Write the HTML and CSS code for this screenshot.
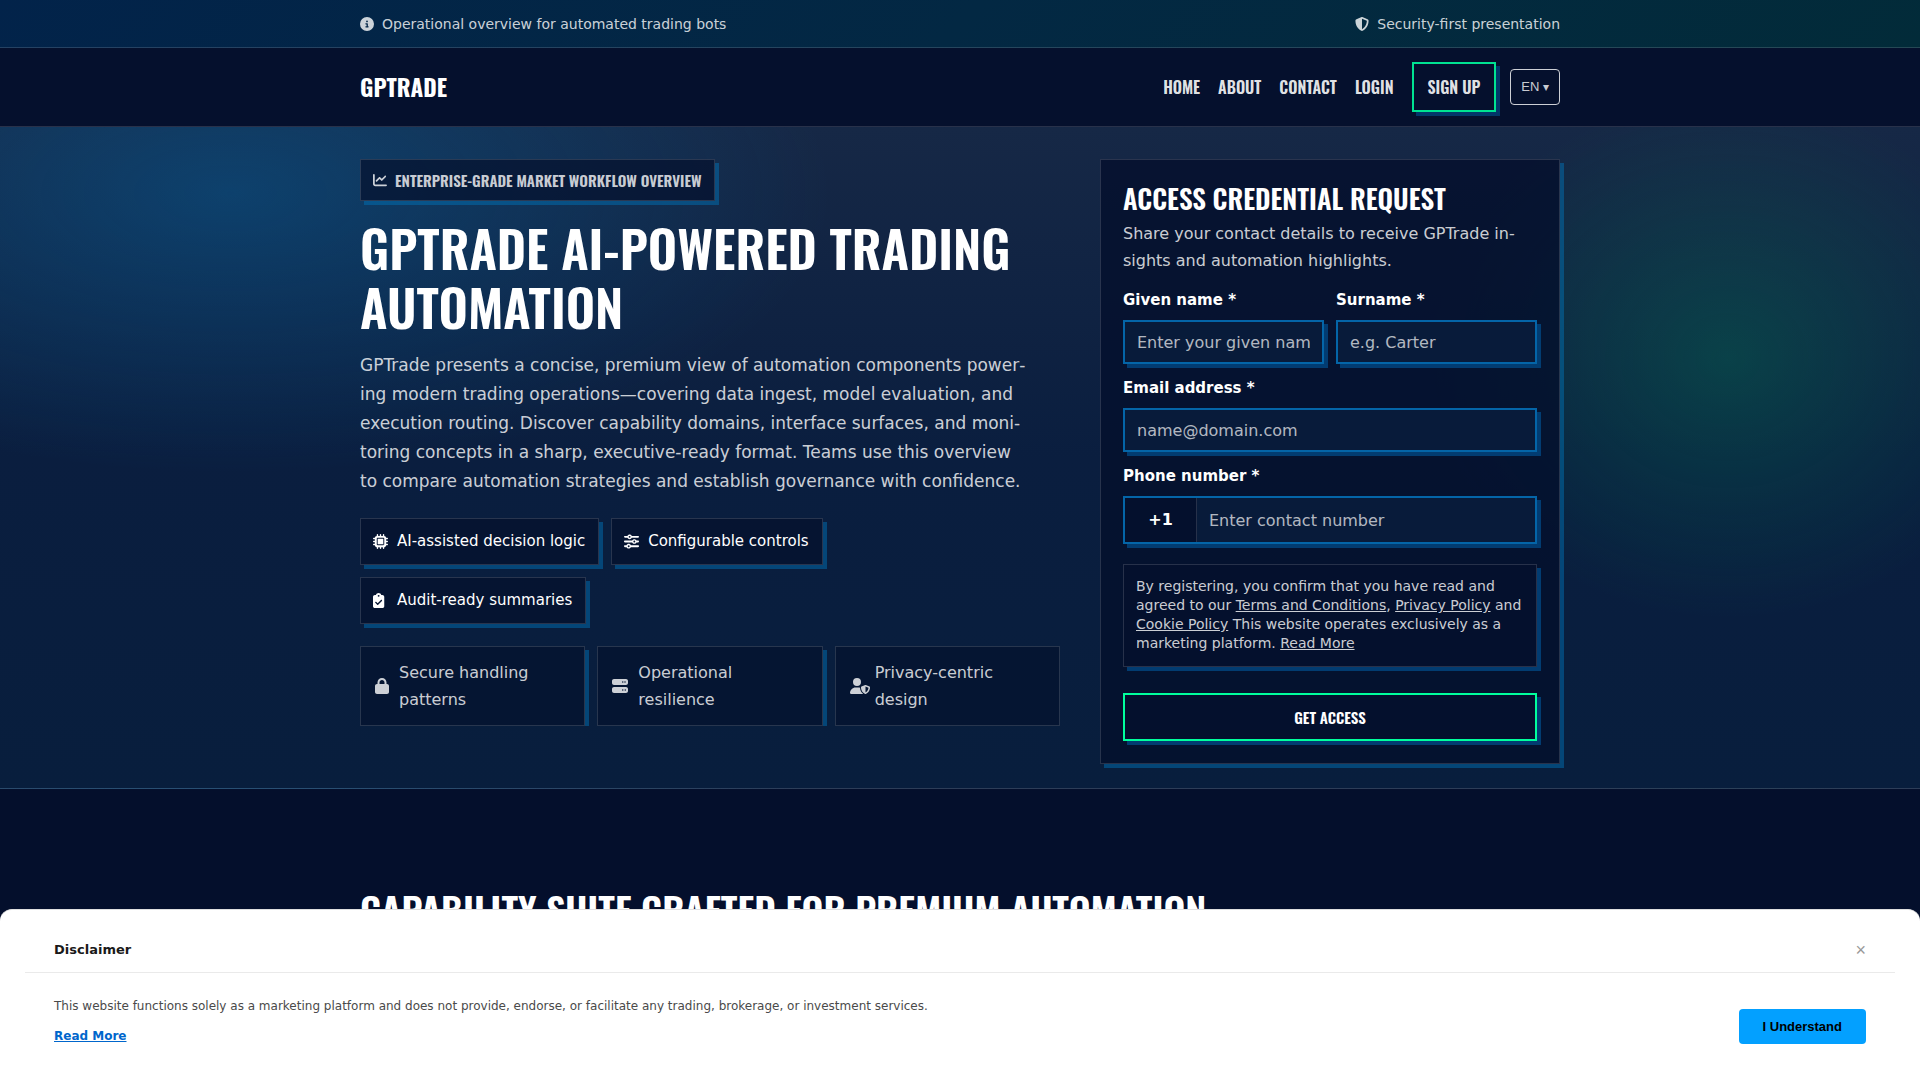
FILE: index.html
```html
<!DOCTYPE html>
<html lang="en">
<head>
<meta charset="utf-8">
<meta name="viewport" content="width=device-width, initial-scale=1">
<title>GPTrade</title>
<link rel="stylesheet" href="styles.css">
</head>
<body>
<div class="topbar">
  <div class="container topbar-row">
    <span class="topbar-item"><svg class="icon icon-14" viewBox="0 0 512 512"><path d="M256 512A256 256 0 1 0 256 0a256 256 0 1 0 0 512zM216 336h24V272H216c-13.3 0-24-10.7-24-24s10.7-24 24-24h48c13.3 0 24 10.7 24 24v88h8c13.3 0 24 10.7 24 24s-10.7 24-24 24H216c-13.3 0-24-10.7-24-24s10.7-24 24-24zm40-208a32 32 0 1 1 0 64 32 32 0 1 1 0-64z"/></svg>Operational overview for automated trading bots</span>
    <span class="topbar-item"><svg class="icon icon-14" viewBox="0 0 512 512"><path d="M256 0c4.6 0 9.2 1 13.4 2.9L457.7 82.8c22 9.3 38.4 31 38.3 57.2c-.5 99.2-41.3 280.7-213.6 363.2c-16.7 8-36.1 8-52.8 0C57.3 420.7 16.5 239.2 16 140c-.1-26.2 16.3-47.9 38.3-57.2L242.7 2.9C246.8 1 251.4 0 256 0zm0 66.8V444.8C394 378 431.1 230.1 432 141.4L256 66.8z"/></svg>Security-first presentation</span>
  </div>
</div>

<header class="header">
  <div class="container header-row">
    <a class="brand" href="#">GPTRADE</a>
    <nav class="nav">
      <a class="nav-link" href="#">HOME</a>
      <a class="nav-link" href="#">ABOUT</a>
      <a class="nav-link" href="#">CONTACT</a>
      <a class="nav-link" href="#">LOGIN</a>
      <a class="nav-link nav-cta" href="#">SIGN UP</a>
      <button class="lang" type="button">EN <span class="lang-caret">▾</span></button>
    </nav>
  </div>
</header>

<main>
  <section class="hero">
    <div class="container hero-grid">
      <div class="hero-copy">
        <div class="badge"><svg class="icon icon-14" viewBox="0 0 512 512"><path d="M64 64c0-17.7-14.3-32-32-32S0 46.3 0 64V400c0 44.2 35.8 80 80 80H480c17.7 0 32-14.3 32-32s-14.3-32-32-32H80c-8.8 0-16-7.2-16-16V64zm406.6 86.6c12.5-12.5 12.5-32.8 0-45.3s-32.8-12.5-45.3 0L320 210.7l-57.4-57.4c-12.5-12.5-32.8-12.5-45.3 0l-112 112c-12.5 12.5-12.5 32.8 0 45.3s32.8 12.5 45.3 0L240 221.3l57.4 57.4c12.5 12.5 32.8 12.5 45.3 0l128-128z"/></svg>ENTERPRISE-GRADE MARKET WORKFLOW OVERVIEW</div>
        <h1 class="hero-title">GPTRADE AI-POWERED TRADING AUTOMATION</h1>
        <p class="hero-text">GPTrade presents a concise, premium view of automation components power&shy;ing modern trading operations—covering data ingest, model evaluation, and execution routing. Discover capability domains, interface surfaces, and moni&shy;toring concepts in a sharp, executive-ready format. Teams use this overview to compare automation strategies and establish governance with confidence.</p>
        <ul class="chips">
          <li class="chip"><svg class="icon icon-15" viewBox="0 0 512 512"><path fill-rule="evenodd" d="M176 24c0-13.3-10.7-24-24-24s-24 10.7-24 24V64c-35.3 0-64 28.7-64 64H24c-13.3 0-24 10.7-24 24s10.7 24 24 24H64v56H24c-13.3 0-24 10.7-24 24s10.7 24 24 24H64v56H24c-13.3 0-24 10.7-24 24s10.7 24 24 24H64c0 35.3 28.7 64 64 64v40c0 13.3 10.7 24 24 24s24-10.7 24-24V448h56v40c0 13.3 10.7 24 24 24s24-10.7 24-24V448h56v40c0 13.3 10.7 24 24 24s24-10.7 24-24V448c35.3 0 64-28.7 64-64h40c13.3 0 24-10.7 24-24s-10.7-24-24-24H448V280h40c13.3 0 24-10.7 24-24s-10.7-24-24-24H448V176h40c13.3 0 24-10.7 24-24s-10.7-24-24-24H448c0-35.3-28.7-64-64-64V24c0-13.3-10.7-24-24-24s-24 10.7-24 24V64H280V24c0-13.3-10.7-24-24-24s-24 10.7-24 24V64H176V24zM160 128H352c17.7 0 32 14.3 32 32V352c0 17.7-14.3 32-32 32H160c-17.7 0-32-14.3-32-32V160c0-17.7 14.3-32 32-32zm192 32H160V352H352V160z"/></svg>AI-assisted decision logic</li>
          <li class="chip"><svg class="icon icon-15" viewBox="0 0 512 512"><path d="M0 416c0 17.7 14.3 32 32 32l54.7 0c12.3 28.3 40.5 48 73.3 48s61-19.7 73.3-48L480 448c17.7 0 32-14.3 32-32s-14.3-32-32-32l-246.7 0c-12.3-28.3-40.5-48-73.3-48s-61 19.7-73.3 48L32 384c-17.7 0-32 14.3-32 32zm128 0a32 32 0 1 1 64 0 32 32 0 1 1 -64 0zM320 256a32 32 0 1 1 64 0 32 32 0 1 1 -64 0zm32-80c-32.8 0-61 19.7-73.3 48L32 224c-17.7 0-32 14.3-32 32s14.3 32 32 32l246.7 0c12.3 28.3 40.5 48 73.3 48s61-19.7 73.3-48l54.7 0c17.7 0 32-14.3 32-32s-14.3-32-32-32l-54.7 0c-12.3-28.3-40.5-48-73.3-48zM192 128a32 32 0 1 1 0-64 32 32 0 1 1 0 64zm73.3-64C253 35.7 224.8 16 192 16s-61 19.7-73.3 48L32 64C14.3 64 0 78.3 0 96s14.3 32 32 32l86.7 0c12.3 28.3 40.5 48 73.3 48s61-19.7 73.3-48L480 128c17.7 0 32-14.3 32-32s-14.3-32-32-32L265.3 64z"/></svg>Configurable controls</li>
          <li class="chip"><svg class="icon icon-15" viewBox="0 0 384 512" preserveAspectRatio="xMinYMid meet"><path d="M192 0c-41.8 0-77.4 26.7-90.5 64H64C28.7 64 0 92.7 0 128V448c0 35.3 28.7 64 64 64H320c35.3 0 64-28.7 64-64V128c0-35.3-28.7-64-64-64H282.5C269.4 26.7 233.8 0 192 0zm0 64a32 32 0 1 1 0 64 32 32 0 1 1 0-64zM305 273L177 401c-9.4 9.4-24.6 9.4-33.9 0L79 337c-9.4-9.4-9.4-24.6 0-33.9s24.6-9.4 33.9 0l47 47L271 239c9.4-9.4 24.6-9.4 33.9 0s9.4 24.6 0 33.9z"/></svg>Audit-ready summaries</li>
        </ul>
        <ul class="trust">
          <li class="trust-item"><svg class="icon icon-lock" viewBox="0 0 448 512"><path d="M144 144v48H304V144c0-44.2-35.8-80-80-80s-80 35.8-80 80zM80 192V144C80 64.5 144.5 0 224 0s144 64.5 144 144v48h16c35.3 0 64 28.7 64 64V448c0 35.3-28.7 64-64 64H64c-35.3 0-64-28.7-64-64V256c0-35.3 28.7-64 64-64H80z"/></svg><span>Secure handling patterns</span></li>
          <li class="trust-item"><svg class="icon icon-16" viewBox="0 0 512 512"><path d="M64 32C28.7 32 0 60.7 0 96v64c0 35.3 28.7 64 64 64H448c35.3 0 64-28.7 64-64V96c0-35.3-28.7-64-64-64H64zm280 72a24 24 0 1 1 0 48 24 24 0 1 1 0-48zm48 24a24 24 0 1 1 48 0 24 24 0 1 1 -48 0zM64 288c-35.3 0-64 28.7-64 64v64c0 35.3 28.7 64 64 64H448c35.3 0 64-28.7 64-64V352c0-35.3-28.7-64-64-64H64zm280 72a24 24 0 1 1 0 48 24 24 0 1 1 0-48zm56 24a24 24 0 1 1 48 0 24 24 0 1 1 -48 0z"/></svg><span>Operational resilience</span></li>
          <li class="trust-item trust-item-tight"><svg class="icon icon-user" viewBox="0 0 640 512"><path d="M224 256A128 128 0 1 0 224 0a128 128 0 1 0 0 256zm-45.7 48C79.8 304 0 383.8 0 482.3C0 498.7 13.3 512 29.7 512H418.3c1.8 0 3.5-.2 5.3-.5c-76.3-55.1-99.8-141-103.1-200.2c-16.1-4.8-33.1-7.3-50.7-7.3H178.3zm308.8-78.3l-120 48C358 277.4 352 286.2 352 296c0 63.3 25.9 168.8 134.8 214.2c5.9 2.5 12.6 2.5 18.5 0C614.1 464.8 640 359.3 640 296c0-9.8-6-18.6-15.1-22.3l-120-48c-5.7-2.3-12.1-2.3-17.8 0zM591.4 312c-3.9 50.7-27.2 116.7-95.4 149.7V273.8L591.4 312z"/></svg><span>Privacy-centric design</span></li>
        </ul>
      </div>

      <form class="card">
        <h2 class="card-title">ACCESS CREDENTIAL REQUEST</h2>
        <p class="card-text">Share your contact details to receive GPTrade in&shy;sights and automation highlights.</p>
        <div class="field-row">
          <div class="field">
            <label class="label" for="first">Given name *</label>
            <input class="input" id="first" type="text" placeholder="Enter your given name">
          </div>
          <div class="field">
            <label class="label" for="last">Surname *</label>
            <input class="input" id="last" type="text" placeholder="e.g. Carter">
          </div>
        </div>
        <div class="field">
          <label class="label" for="email">Email address *</label>
          <input class="input" id="email" type="email" placeholder="name@domain.com">
        </div>
        <div class="field">
          <label class="label" for="phone">Phone number *</label>
          <div class="phone">
            <span class="phone-code">+1</span>
            <input class="phone-input" id="phone" type="tel" placeholder="Enter contact number">
          </div>
        </div>
        <p class="consent">By registering, you confirm that you have read and agreed to our <a href="#">Terms and Conditions</a>, <a href="#">Privacy Policy</a> and <a href="#">Cookie Policy</a> This website operates exclusively as a marketing platform. <a href="#">Read More</a></p>
        <button class="submit" type="submit">GET ACCESS</button>
      </form>
    </div>
  </section>

  <section class="capability">
    <div class="container">
      <h2 class="section-title">CAPABILITY SUITE CRAFTED FOR PREMIUM AUTOMATION</h2>
    </div>
  </section>
</main>

<aside class="disclaimer" aria-label="Disclaimer">
  <div class="disclaimer-head">
    <strong class="disclaimer-title">Disclaimer</strong>
    <button class="disclaimer-close" type="button" aria-label="Close">×</button>
  </div>
  <div class="disclaimer-body">
    <div class="disclaimer-copy">
      <p class="disclaimer-text">This website functions solely as a marketing platform and does not provide, endorse, or facilitate any trading, brokerage, or investment services.</p>
      <a class="disclaimer-link" href="#">Read More</a>
    </div>
    <button class="disclaimer-ok" type="button">I Understand</button>
  </div>
</aside>
</body>
</html>
```
FILE: styles.css
```css
:root {
  --navy: #040f2c;
  --line: rgba(255, 255, 255, 0.14);
  --muted: rgba(255, 255, 255, 0.8);
  --shadow: 4px 4px 0 rgba(0, 119, 190, 0.45);
  --display: Oswald, "Liberation Sans Narrow", "DejaVu Sans Condensed", sans-serif;
  --body: "DejaVu Sans", sans-serif;
}

*, *::before, *::after { box-sizing: border-box; }

html { overflow: hidden; }

body {
  margin: 0;
  height: 100vh;
  overflow: hidden;
  background: var(--navy);
  color: #fff;
  font: 16px/27px var(--body);
}

h1, h2, p, ul { margin: 0; padding: 0; }
ul { list-style: none; }

.container {
  width: 100%;
  max-width: 1200px;
  margin: 0 auto;
}

.icon { flex: none; fill: currentColor; height: 16px; }
.icon-14 { width: 14px; height: 14px; }
.icon-15 { width: 15px; height: 15px; }
.icon-16 { width: 16px; }
.icon-lock { width: 14px; }
.icon-user { width: 20px; }

.topbar {
  background: linear-gradient(135deg, #02234a, #032843 50%, #022b39);
  border-bottom: 1px solid var(--line);
}
.topbar-row {
  display: flex;
  justify-content: space-between;
  padding: 12px 0 11px;
}
.topbar-item {
  display: flex;
  align-items: center;
  gap: 8px;
  color: var(--muted);
  font-size: 14px;
  line-height: 24px;
}

.header { border-bottom: 1px solid var(--line); background: #05102d; }
.header-row {
  display: flex;
  align-items: center;
  justify-content: space-between;
  padding: 14px 0;
}
.brand {
  color: #fff;
  font: 700 23px/36px var(--display);
  text-decoration: none;
}
.nav { display: flex; align-items: center; gap: 18px; }
.nav-link {
  color: rgba(255, 255, 255, 0.9);
  font: 600 16px/26px var(--display);
  text-decoration: none;
}
.nav-cta {
  padding: 10px 14px;
  border: 2px solid #00e291;
  box-shadow: 4px 4px 0 rgba(0, 102, 179, 0.45);
}
.lang {
  height: 36px;
  margin-left: -4px;
  padding: 0 10px;
  border: 1px solid var(--muted);
  border-radius: 4px;
  background: none;
  color: var(--muted);
  font: 13px/20px "Liberation Sans", sans-serif;
}
.lang-caret { font-size: 12px; }

.hero {
  padding: 32px 0 24px;
  border-bottom: 1px solid rgba(255, 255, 255, 0.1);
  background:
    radial-gradient(600px 280px at 12% 10%, rgba(0, 119, 190, 0.33), transparent),
    radial-gradient(300px 260px at 90% 35%, rgba(0, 140, 90, 0.3), transparent),
    linear-gradient(180deg, #162846, #0a1e3f 50%, #081e3d);
}
.hero-grid {
  display: grid;
  grid-template-columns: minmax(0, 700fr) minmax(0, 460fr);
  gap: 40px;
  align-items: start;
}

.badge {
  display: inline-flex;
  align-items: center;
  gap: 8px;
  padding: 8px 12px;
  border: 1px solid var(--line);
  background: rgba(4, 15, 44, 0.7);
  box-shadow: var(--shadow);
  color: var(--muted);
  font: 600 15px/24px var(--display);
  vertical-align: top;
}
.hero-title {
  margin-top: 17px;
  font: 600 51px/59px var(--display);
}
.hero-text {
  max-width: 670px;
  margin-top: 15px;
  color: var(--muted);
  font-size: 17px;
  line-height: 29px;
}
.chips {
  display: flex;
  flex-wrap: wrap;
  gap: 12px;
  max-width: 620px;
  margin-top: 22px;
}
.chip {
  display: flex;
  align-items: center;
  gap: 9px;
  padding: 10px 13px 10px 12px;
  border: 1px solid var(--line);
  background: rgba(4, 15, 44, 0.7);
  box-shadow: var(--shadow);
  font-size: 15px;
  line-height: 25px;
}
.trust {
  display: grid;
  grid-template-columns: repeat(3, minmax(0, 1fr));
  gap: 12px;
  margin-top: 22px;
  overflow: hidden;
}
.trust-item {
  display: flex;
  align-items: center;
  gap: 10px;
  padding: 12px 14px;
  border: 1px solid var(--line);
  background: rgba(4, 15, 44, 0.6);
  box-shadow: var(--shadow);
  color: var(--muted);
}
.trust-item-tight { gap: 5px; }

.card {
  display: grid;
  padding: 22px;
  border: 1px solid var(--line);
  background: rgba(4, 15, 44, 0.8);
  box-shadow: var(--shadow);
}
.card-title { margin-bottom: 5px; font: 600 27px/33px var(--display); }
.card-text { margin-bottom: 2px; color: var(--muted); }
.field-row {
  display: grid;
  grid-template-columns: 1fr 1fr;
  gap: 12px;
}
.field { display: grid; gap: 8px; margin-top: 12px; }
.field-row .field { min-width: 0; }
.label { font-weight: 700; font-size: 15px; line-height: 24px; }
.input, .phone {
  width: 100%;
  border: 2px solid #0465a8;
  border-radius: 0;
  background: #081b3a;
  box-shadow: 4px 4px 0 rgba(0, 102, 179, 0.5);
}
.input, .phone-input {
  height: 44px;
  padding: 0 12px;
  color: #fff;
  font: 16px/20px var(--body);
}
.input::placeholder, .phone-input::placeholder { color: rgba(255, 255, 255, 0.7); opacity: 1; }
.phone { display: flex; }
.phone-code {
  width: 72px;
  border-right: 1px solid var(--line);
  background: #04102d;
  font-weight: 700;
  line-height: 44px;
  text-align: center;
}
.phone-input { flex: 1; min-width: 0; border: 0; background: none; }
.consent {
  margin-top: 20px;
  padding: 12px 12px 13px;
  border: 1px solid var(--line);
  background: #04102d;
  box-shadow: 4px 4px 0 rgba(0, 102, 179, 0.5);
  color: var(--muted);
  font-size: 14px;
  line-height: 19px;
}
.consent a { color: inherit; }
.submit {
  height: 48px;
  margin-top: 26px;
  border: 2px solid #00ff9d;
  background: #04102d;
  box-shadow: 4px 4px 0 rgba(0, 102, 179, 0.5);
  color: #fff;
  font: 600 15px/20px var(--display);
}

.capability { padding: 96px 0; }
.section-title { font: 600 38px/48px var(--display); white-space: nowrap; }

.disclaimer {
  position: fixed;
  right: 0;
  bottom: 0;
  left: 0;
  padding: 16px 25px 34px;
  border-top: 1px solid #e0e0e0;
  border-radius: 12px 12px 0 0;
  background: #fff;
  color: #4a4a4a;
  font-size: 12px;
  line-height: 20px;
}
.disclaimer-head {
  display: flex;
  align-items: center;
  justify-content: space-between;
  padding: 14px 29px 12px;
  border-bottom: 1px solid #eaeaea;
}
.disclaimer-title { color: #1a1a1a; font-size: 13px; }
.disclaimer-close {
  padding: 0;
  border: 0;
  background: none;
  color: #999;
  font: 18px/20px "Liberation Sans", sans-serif;
}
.disclaimer-body {
  display: flex;
  align-items: flex-end;
  justify-content: space-between;
  padding: 23px 29px 0;
}
.disclaimer-copy { display: grid; justify-items: start; gap: 10px; }
.disclaimer-link { color: #0066cc; font-weight: 700; }
.disclaimer-ok {
  height: 35px;
  margin-bottom: 2px;
  padding: 0 24px;
  border: 0;
  border-radius: 4px;
  background: #03a0ff;
  color: #000;
  font: 700 13px/20px "Liberation Sans", sans-serif;
}
```
